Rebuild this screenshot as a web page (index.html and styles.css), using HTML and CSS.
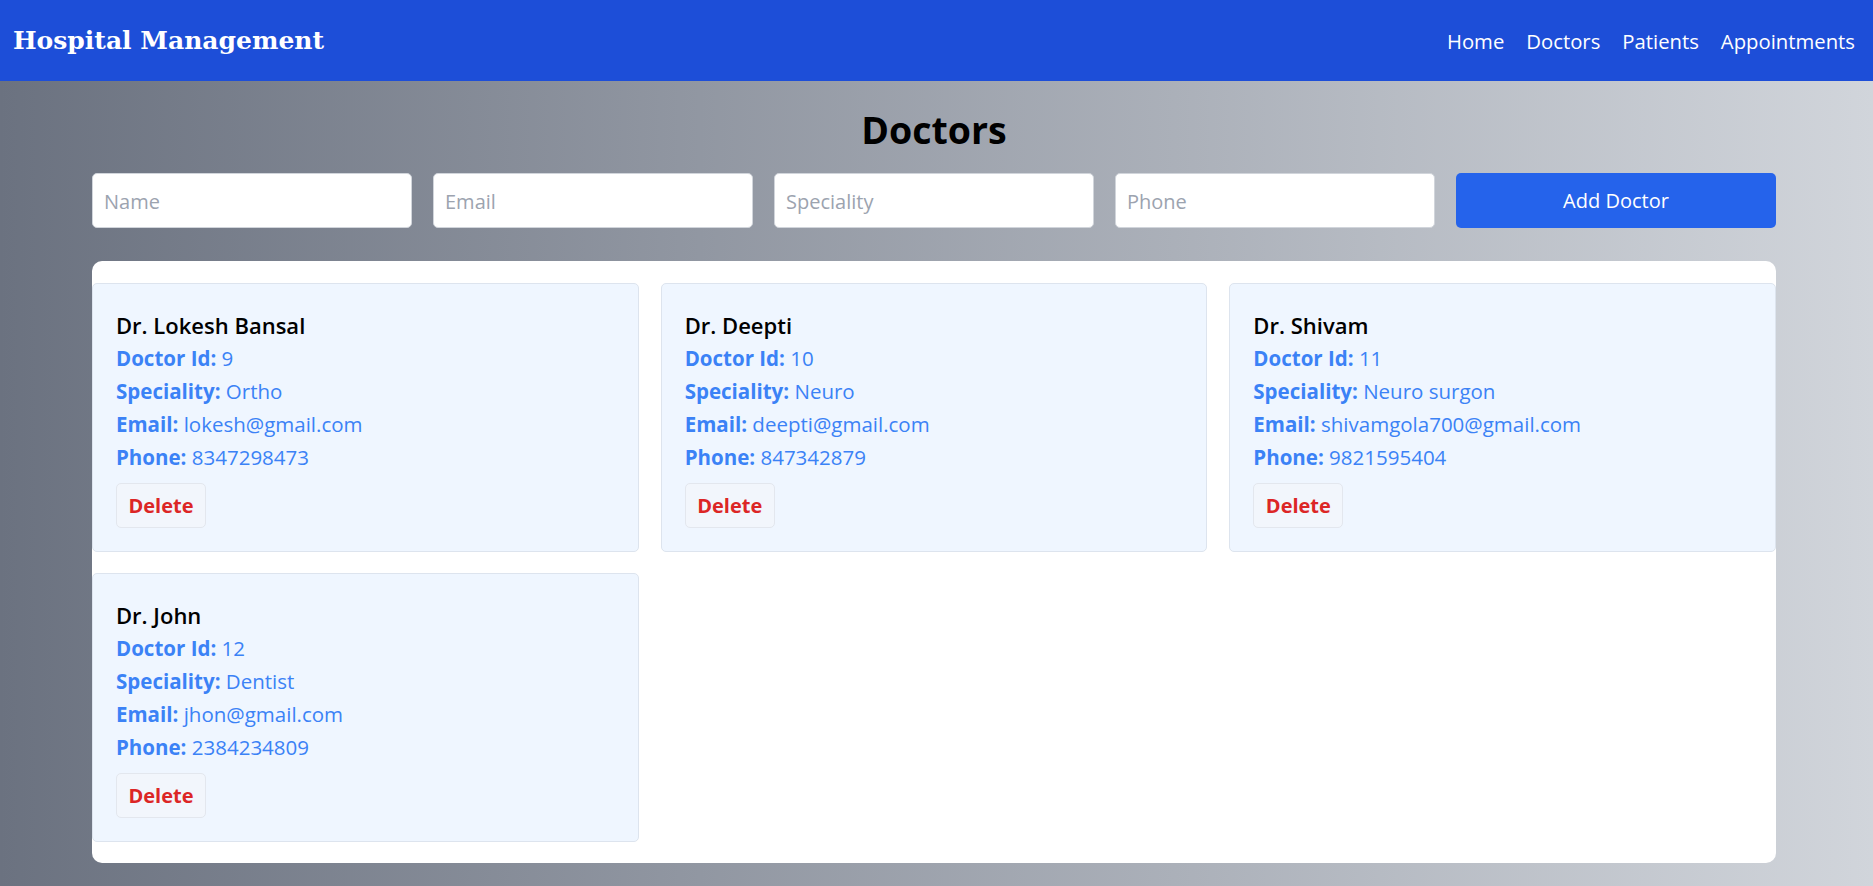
FILE: index.html
```html
<!DOCTYPE html>
<html lang="en">
<head>
<meta charset="utf-8">
<title>Hospital Management</title>
<link rel="stylesheet" href="styles.css">
</head>
<body>
<header class="navbar">
  <h1 class="brand">Hospital Management</h1>
  <nav class="nav-links">
    <a href="#">Home</a>
    <a href="#">Doctors</a>
    <a href="#">Patients</a>
    <a href="#">Appointments</a>
  </nav>
</header>
<main class="page">
  <h2 class="page-title">Doctors</h2>
  <form class="doctor-form">
    <input class="field" type="text" placeholder="Name">
    <input class="field" type="text" placeholder="Email">
    <input class="field" type="text" placeholder="Speciality">
    <input class="field" type="text" placeholder="Phone">
    <button class="add-btn" type="button">Add Doctor</button>
  </form>
  <section class="doctor-panel">
    <div class="doctor-grid">
      <article class="doctor-card">
        <h3 class="doctor-name">Dr. Lokesh Bansal</h3>
        <p class="info"><b>Doctor Id:</b> 9</p>
        <p class="info"><b>Speciality:</b> Ortho</p>
        <p class="info"><b>Email:</b> lokesh@gmail.com</p>
        <p class="info"><b>Phone:</b> 8347298473</p>
        <button class="delete-btn" type="button">Delete</button>
      </article>
      <article class="doctor-card">
        <h3 class="doctor-name">Dr. Deepti</h3>
        <p class="info"><b>Doctor Id:</b> 10</p>
        <p class="info"><b>Speciality:</b> Neuro</p>
        <p class="info"><b>Email:</b> deepti@gmail.com</p>
        <p class="info"><b>Phone:</b> 847342879</p>
        <button class="delete-btn" type="button">Delete</button>
      </article>
      <article class="doctor-card">
        <h3 class="doctor-name">Dr. Shivam</h3>
        <p class="info"><b>Doctor Id:</b> 11</p>
        <p class="info"><b>Speciality:</b> Neuro surgon</p>
        <p class="info"><b>Email:</b> shivamgola700@gmail.com</p>
        <p class="info"><b>Phone:</b> 9821595404</p>
        <button class="delete-btn" type="button">Delete</button>
      </article>
      <article class="doctor-card">
        <h3 class="doctor-name">Dr. John</h3>
        <p class="info"><b>Doctor Id:</b> 12</p>
        <p class="info"><b>Speciality:</b> Dentist</p>
        <p class="info"><b>Email:</b> jhon@gmail.com</p>
        <p class="info"><b>Phone:</b> 2384234809</p>
        <button class="delete-btn" type="button">Delete</button>
      </article>
    </div>
  </section>
</main>
</body>
</html>
```

FILE: styles.css
```css
* {
  box-sizing: border-box;
}

html, body {
  margin: 0;
  padding: 0;
}

body {
  min-height: 100vh;
  font-family: "Open Sans", "Noto Sans", sans-serif;
  background: linear-gradient(to right, #6b7280, #d1d5db);
  color: #000;
}

.navbar {
  height: 81px;
  background: #1d4ed8;
  display: flex;
  align-items: center;
  justify-content: space-between;
  padding: 0 18px 0 13px;
}

.brand {
  margin: 0;
  font-family: "DejaVu Serif", "Liberation Serif", serif;
  font-weight: bold;
  font-size: 25px;
  color: #fff;
  letter-spacing: 0;
}

.nav-links {
  display: flex;
  gap: 22px;
}

.nav-links a {
  color: #fff;
  text-decoration: none;
  font-size: 20.3px;
  line-height: 28px;
}

.page {
  padding: 0 97px 0 92px;
}

.page-title {
  margin: 26px 0 21px;
  text-align: center;
  font-size: 37.5px;
  line-height: 45px;
  font-weight: 700;
}

.doctor-form {
  display: grid;
  grid-template-columns: repeat(5, 1fr);
  gap: 21px;
  margin: 0 0 33px;
}

.field {
  height: 55px;
  padding: 11px 11px 9px;
  border: 1px solid #d1d5db;
  border-radius: 5px;
  background: #fff;
  font-family: inherit;
  font-size: 20px;
  line-height: 33px;
  color: #111827;
  outline: none;
}

.field::placeholder {
  color: #9ca3af;
}

.add-btn {
  height: 55px;
  border: none;
  border-radius: 5px;
  background: #2563eb;
  color: #fff;
  font-family: inherit;
  font-size: 20px;
}

.doctor-panel {
  background: #fff;
  border-radius: 10px;
  padding: 22px 0 21px;
}

.doctor-grid {
  display: grid;
  grid-template-columns: repeat(3, 1fr);
  column-gap: 22px;
  row-gap: 21px;
}

.doctor-card {
  background: #eff6ff;
  border: 1px solid #dde4ee;
  border-radius: 5px;
  padding: 24px 23px 23px;
}

.doctor-name {
  margin: 0;
  font-size: 22px;
  line-height: 34px;
  font-weight: 600;
  color: #000;
}

.info {
  margin: 0;
  font-size: 20.5px;
  line-height: 33px;
  color: #3b82f6;
}

.info b {
  font-weight: 700;
}

.delete-btn {
  margin-top: 9px;
  height: 45px;
  padding: 0 11.5px;
  border: 1px solid #e3e7ee;
  border-radius: 5px;
  background: #f2f6fc;
  color: #dc2626;
  font-family: inherit;
  font-size: 20px;
  font-weight: 700;
}
```
